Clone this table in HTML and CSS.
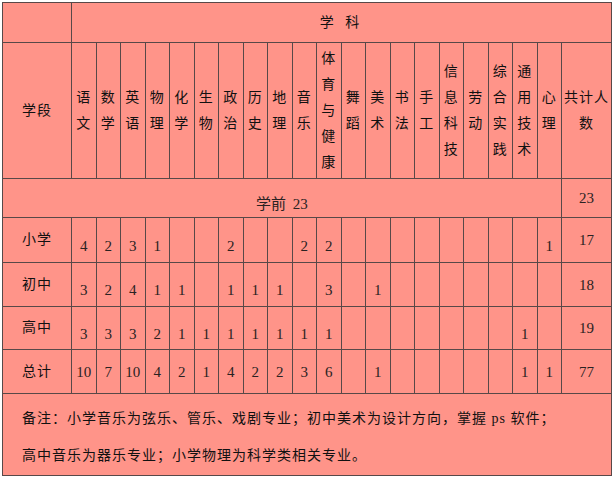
FILE: index.html
```html
<!DOCTYPE html>
<html lang="zh">
<head>
<meta charset="utf-8">
<title>学科教师需求表</title>
<link rel="stylesheet" href="styles.css">
</head>
<body>
<table class="grid">
  <colgroup>
    <col class="c-stage">
    <col class="c-subj"><col class="c-subj"><col class="c-subj"><col class="c-subj"><col class="c-subj">
    <col class="c-subj"><col class="c-subj"><col class="c-subj"><col class="c-subj"><col class="c-subj">
    <col class="c-subj"><col class="c-subj"><col class="c-subj"><col class="c-subj"><col class="c-subj">
    <col class="c-subj"><col class="c-subj"><col class="c-subj"><col class="c-subj"><col class="c-subj">
    <col class="c-total">
  </colgroup>
  <tr class="r-title">
    <td></td>
    <td colspan="21" class="title">学 科</td>
  </tr>
  <tr class="r-subjects">
    <td class="label">学段</td>
    <td class="subj">语文</td>
    <td class="subj">数学</td>
    <td class="subj">英语</td>
    <td class="subj">物理</td>
    <td class="subj">化学</td>
    <td class="subj">生物</td>
    <td class="subj">政治</td>
    <td class="subj">历史</td>
    <td class="subj">地理</td>
    <td class="subj">音乐</td>
    <td class="subj">体育与健康</td>
    <td class="subj">舞蹈</td>
    <td class="subj">美术</td>
    <td class="subj">书法</td>
    <td class="subj">手工</td>
    <td class="subj">信息科技</td>
    <td class="subj">劳动</td>
    <td class="subj">综合实践</td>
    <td class="subj">通用技术</td>
    <td class="subj">心理</td>
    <td class="subj total-head">共计人数</td>
  </tr>
  <tr class="r-pre">
    <td colspan="21" class="num low pre">学前 23</td>
    <td class="num">23</td>
  </tr>
  <tr class="r-primary">
    <td class="label">小学</td>
    <td class="num low">4</td><td class="num low">2</td><td class="num low">3</td><td class="num low">1</td><td class="num low"></td>
    <td class="num low"></td><td class="num low">2</td><td class="num low"></td><td class="num low"></td><td class="num low">2</td>
    <td class="num low">2</td><td class="num low"></td><td class="num low"></td><td class="num low"></td><td class="num low"></td>
    <td class="num low"></td><td class="num low"></td><td class="num low"></td><td class="num low"></td><td class="num low">1</td>
    <td class="num">17</td>
  </tr>
  <tr class="r-junior">
    <td class="label">初中</td>
    <td class="num low">3</td><td class="num low">2</td><td class="num low">4</td><td class="num low">1</td><td class="num low">1</td>
    <td class="num low"></td><td class="num low">1</td><td class="num low">1</td><td class="num low">1</td><td class="num low"></td>
    <td class="num low">3</td><td class="num low"></td><td class="num low">1</td><td class="num low"></td><td class="num low"></td>
    <td class="num low"></td><td class="num low"></td><td class="num low"></td><td class="num low"></td><td class="num low"></td>
    <td class="num">18</td>
  </tr>
  <tr class="r-senior">
    <td class="label">高中</td>
    <td class="num low">3</td><td class="num low">3</td><td class="num low">3</td><td class="num low">2</td><td class="num low">1</td>
    <td class="num low">1</td><td class="num low">1</td><td class="num low">1</td><td class="num low">1</td><td class="num low">1</td>
    <td class="num low">1</td><td class="num low"></td><td class="num low"></td><td class="num low"></td><td class="num low"></td>
    <td class="num low"></td><td class="num low"></td><td class="num low"></td><td class="num low">1</td><td class="num low"></td>
    <td class="num">19</td>
  </tr>
  <tr class="r-sum">
    <td class="label">总计</td>
    <td class="num">10</td><td class="num">7</td><td class="num">10</td><td class="num">4</td><td class="num">2</td>
    <td class="num">1</td><td class="num">4</td><td class="num">2</td><td class="num">2</td><td class="num">3</td>
    <td class="num">6</td><td class="num"></td><td class="num">1</td><td class="num"></td><td class="num"></td>
    <td class="num"></td><td class="num"></td><td class="num"></td><td class="num">1</td><td class="num">1</td>
    <td class="num">77</td>
  </tr>
  <tr class="r-note">
    <td colspan="22" class="note">备注：小学音乐为弦乐、管乐、戏剧专业；初中美术为设计方向，掌握 ps 软件；<br>高中音乐为器乐专业；小学物理为科学类相关专业。</td>
  </tr>
</table>
</body>
</html>
```

FILE: styles.css
```css
html, body {
  margin: 0;
  padding: 0;
  background: #ffffff;
}

.grid {
  margin: 2px 0 0 2px;
  width: 610px;
  table-layout: fixed;
  border-collapse: collapse;
  background: #ff9489;
  font-family: "Liberation Serif", "Noto Sans CJK SC", serif;
  font-size: 14px;
  letter-spacing: 1px;
  color: #111111;
}

.c-stage { width: 69px; }
.c-subj { width: 24.5px; }
.c-total { width: 50px; }

.grid td {
  border: 1px solid #584848;
  padding: 0;
  text-align: center;
  vertical-align: middle;
  line-height: 26px;
  overflow: hidden;
}

.r-title { height: 40px; }
.r-subjects { height: 136px; }
.r-pre { height: 39px; }
.r-primary { height: 45px; }
.r-junior { height: 44px; }
.r-senior { height: 43px; }
.r-sum { height: 44px; }
.r-note { height: 82px; }

.title {
  letter-spacing: 4px;
  padding-left: 4px;
}

.subj {
  word-break: break-all;
}

.total-head {
  padding: 0 1px;
}

.num {
  font-size: 15px;
  letter-spacing: 0;
  color: #2a2222;
}

.num.low {
  padding-top: 11px;
}

.pre {
  word-spacing: 3px;
}

.note {
  text-align: left !important;
  padding: 5px 0 0 19px !important;
  line-height: 37px !important;
  font-size: 14px;
  letter-spacing: 1px;
}
```
